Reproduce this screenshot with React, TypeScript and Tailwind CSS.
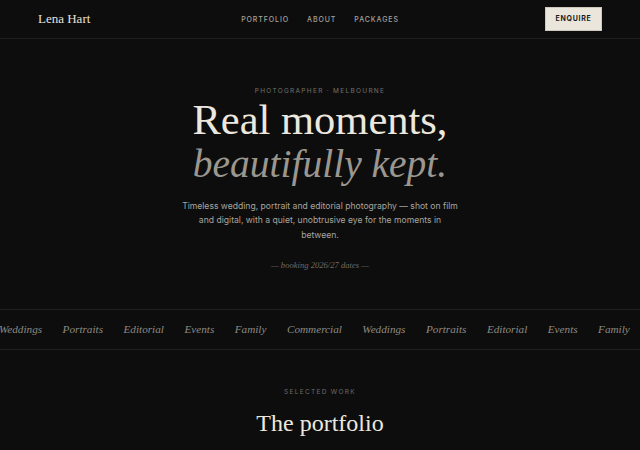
import React from "react";

const serif = { fontFamily: '"Liberation Serif", "DejaVu Serif", serif' };

export default function App() {
  const items = ["Weddings", "Portraits", "Editorial", "Events", "Family", "Commercial"];
  const all = [...items, ...items];
  return (
    <div className="min-h-[450px] w-full bg-[#0d0d0d] text-[#e9e5dc] overflow-hidden font-['Inter',sans-serif]">
      <header className="flex h-[39px] items-center justify-between border-b border-[#1f1f1f] pl-[38px] pr-[38px]">
        <div className="w-[120px] text-[13px] text-[#e6e2da]" style={serif}>Lena Hart</div>
        <nav className="mt-[2px] flex gap-[18px] text-[7px] font-medium tracking-[0.13em] text-[#a6a29b]">
          <span>PORTFOLIO</span>
          <span>ABOUT</span>
          <span>PACKAGES</span>
        </nav>
        <div className="flex w-[120px] justify-end">
          <button className="h-[24px] w-[57px] border border-[#cfc9bd] bg-[#ebe6dc] text-[7px] font-bold tracking-[0.1em] text-[#1a1a1a]">
            ENQUIRE
          </button>
        </div>
      </header>

      <section className="flex flex-col items-center pt-[48px]">
        <div className="text-[6.5px] tracking-[0.2em] text-[#75726c]">PHOTOGRAPHER · MELBOURNE</div>
        <h1 className="mt-[0px] text-center leading-[45px] text-[#ece8df]" style={serif}>
          <span className="block text-[42.5px]">Real moments,</span>
          <em className="block text-[39.5px] text-[#9b978f]">beautifully kept.</em>
        </h1>
        <p className="mt-[12px] w-[278px] text-center text-[8.6px] leading-[14.5px] text-[#a8a59f]">
          Timeless wedding, portrait and editorial photography — shot on film and digital, with a quiet, unobtrusive eye for the moments in between.
        </p>
        <div className="mt-[17px] text-[8.6px] italic text-[#6f6b65]" style={serif}>— booking 2026/27 dates —</div>
      </section>

      <div className="mt-[37px] flex h-[41px] items-center overflow-hidden border-y border-[#1f1f1f]">
        <div className="ml-[-1px] flex shrink-0 gap-[20.5px] whitespace-nowrap text-[11.2px] italic text-[#8e8a83]" style={serif}>
          {all.map((t, i) => (
            <span key={i}>{t}</span>
          ))}
        </div>
      </div>

      <section className="flex flex-col items-center pt-[38px]">
        <div className="text-[6.5px] tracking-[0.2em] text-[#6f6b65]">SELECTED WORK</div>
        <h2 className="mt-[10px] text-[24px] leading-[30px] text-[#ece8df]" style={serif}>The portfolio</h2>
      </section>
    </div>
  );
}
